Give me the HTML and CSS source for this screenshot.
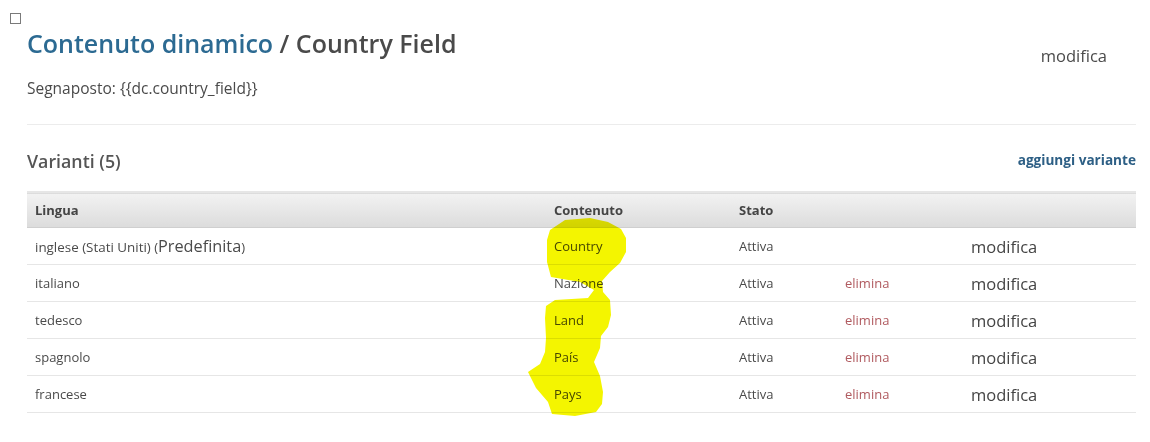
FILE: index.html
```html
<!DOCTYPE html>
<html lang="it">
<head>
<meta charset="utf-8">
<title>Contenuto dinamico</title>
<link rel="stylesheet" href="styles.css">
</head>
<body>
<div class="checkbox-row"><span class="checkbox"></span></div>
<main class="page">
  <header class="head">
    <div class="head-left">
      <h1 class="title"><a class="crumb" href="#">Contenuto dinamico</a> / Country Field</h1>
      <p class="placeholder">Segnaposto: {{dc.country_field}}</p>
    </div>
    <a class="edit-top" href="#">modifica</a>
  </header>
  <hr class="sep">
  <div class="section-head">
    <h2 class="section-title">Varianti (5)</h2>
    <a class="add" href="#">aggiungi variante</a>
  </div>
  <table class="variants">
    <colgroup>
      <col class="c-lang"><col class="c-content"><col class="c-state"><col class="c-del"><col class="c-edit">
    </colgroup>
    <thead>
      <tr><th>Lingua</th><th>Contenuto</th><th>Stato</th><th></th><th></th></tr>
    </thead>
    <tbody>
      <tr><td><span class="lang-main">inglese (Stati Uniti)</span> (<span class="default">Predefinita</span>)</td><td>Country</td><td>Attiva</td><td></td><td><a class="edit" href="#">modifica</a></td></tr>
      <tr><td>italiano</td><td>Nazione</td><td>Attiva</td><td><a class="del" href="#">elimina</a></td><td><a class="edit" href="#">modifica</a></td></tr>
      <tr><td>tedesco</td><td>Land</td><td>Attiva</td><td><a class="del" href="#">elimina</a></td><td><a class="edit" href="#">modifica</a></td></tr>
      <tr><td>spagnolo</td><td>País</td><td>Attiva</td><td><a class="del" href="#">elimina</a></td><td><a class="edit" href="#">modifica</a></td></tr>
      <tr><td>francese</td><td>Pays</td><td>Attiva</td><td><a class="del" href="#">elimina</a></td><td><a class="edit" href="#">modifica</a></td></tr>
    </tbody>
  </table>
</main>
<svg class="marker" width="1150" height="442" viewBox="0 0 1150 442" aria-hidden="true">
  <path fill="#f4f500" d="M550 230 L565 220 L590 218 L608 222 L621 229 L626 238 L626 252 L620 263 L610 272 L602 281 L603 292 L610 300 L611 315 L608 327 L601 336 L600 348 L594 362 L600 376 L603 392 L602 404 L596 412 L575 416 L552 414 L548 402 L536 388 L528 372 L540 364 L545 352 L546 338 L545 318 L546 306 L555 300 L588 298 L594 290 L580 282 L551 277 L547 262 L547 240 Z"/>
</svg>
</body>
</html>
```
FILE: styles.css
```css
html, body {
  margin: 0;
  padding: 0;
  background: #ffffff;
  font-family: "Open Sans", "Liberation Sans", sans-serif;
  color: #444444;
}
.checkbox-row {
  height: 24px;
  padding: 13px 0 0 10px;
  box-sizing: border-box;
}
.checkbox {
  display: block;
  width: 9px;
  height: 9px;
  border: 1px solid #7a7a7a;
  background: #fff;
}
.page {
  padding: 0 14px 0 27px;
}
.head {
  display: flex;
  justify-content: space-between;
  align-items: flex-start;
}
.title {
  margin: 3px 0 0;
  font-size: 25px;
  font-weight: 600;
  line-height: 32px;
  color: #4a4a4a;
}
.crumb {
  color: #2c6a92;
  text-decoration: none;
}
.placeholder {
  margin: 19px 0 0;
  font-size: 15.5px;
  line-height: 20px;
  color: #4a4a4a;
}
.edit-top {
  margin: 22px 29px 0 0;
  font-size: 16.5px;
  line-height: 20px;
  color: #4a4a4a;
  text-decoration: none;
}
.sep {
  margin: 26px 0 0;
  border: 0;
  border-top: 1px solid #ececec;
  height: 0;
}
.section-head {
  display: flex;
  justify-content: space-between;
  align-items: center;
  margin-top: 25px;
  height: 22px;
}
.section-title {
  margin: 0;
  font-size: 17.8px;
  font-weight: 600;
  color: #555555;
}
.add {
  font-size: 13.6px;
  font-weight: 700;
  color: #2d5f85;
  text-decoration: none;
  margin-top: -4px;
}
.variants {
  width: 100%;
  margin-top: 19px;
  border-collapse: collapse;
  table-layout: fixed;
  font-size: 13px;
}
.c-lang { width: 519px; }
.c-content { width: 185px; }
.c-state { width: 106px; }
.c-del { width: 126px; }
.variants thead tr {
  background: linear-gradient(#f2f2f2, #dcdcdc);
  border-top: 2px solid #e6e6e6;
  border-bottom: 1px solid #cfcfcf;
}
.variants th {
  height: 34px;
  padding: 0 8px;
  text-align: left;
  font-weight: 700;
  color: #444444;
}
.variants td {
  height: 36px;
  padding: 0 8px;
  border-bottom: 1px solid #e6e6e6;
  color: #4a4a4a;
  white-space: nowrap;
}
.lang-main {
  font-size: 13.4px;
}
.default {
  font-size: 16.3px;
}
.del {
  color: #b05a5f;
  text-decoration: none;
}
.edit {
  font-size: 16.5px;
  color: #444444;
  text-decoration: none;
}
.marker {
  position: absolute;
  left: 0;
  top: 0;
  pointer-events: none;
  mix-blend-mode: multiply;
}
```
